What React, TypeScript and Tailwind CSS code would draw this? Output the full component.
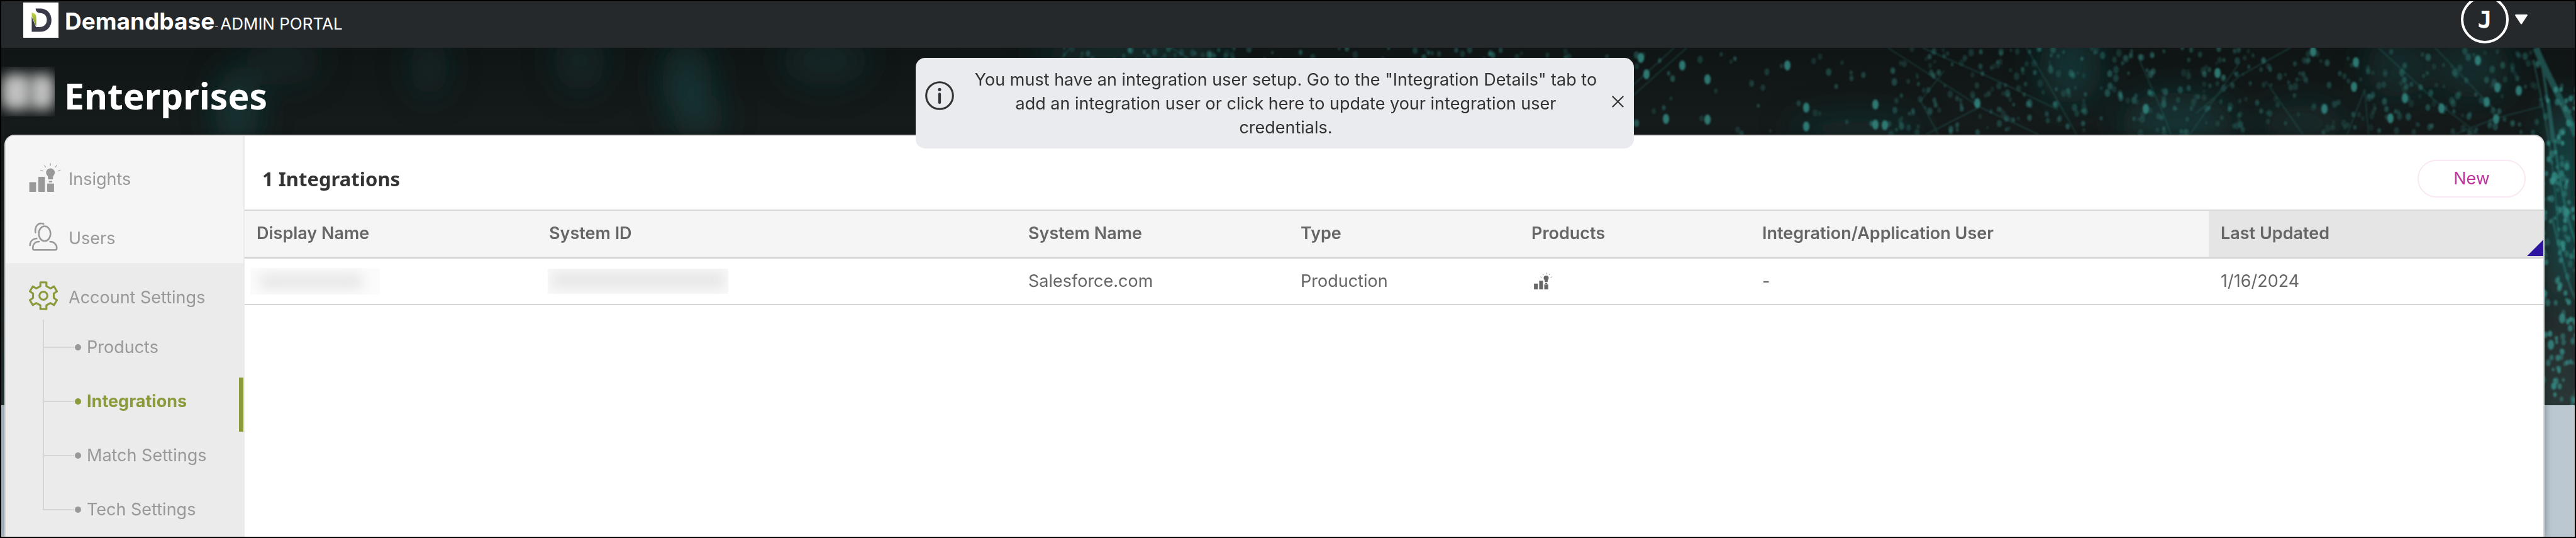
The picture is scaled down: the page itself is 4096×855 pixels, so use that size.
import React from 'react';

type IconProps = { className?: string };

const InsightsIcon: React.FC<IconProps> = ({ className }) => (
  <svg viewBox="0 0 58 53" fill="currentColor" stroke="none" className={className} aria-hidden="true">
    <rect x="0.3" y="35" width="12.4" height="18" rx="1" />
    <rect x="16.8" y="25.3" width="12.2" height="27.7" rx="1" />
    <rect x="33" y="37.7" width="12.6" height="15.3" rx="1" />
    <path d="M39 9.7a8 8 0 0 1 8 8c0 4-3.3 5.5-3.3 9V30h-9.2v-3.3c0-3.5-3.5-5-3.5-9a8 8 0 0 1 8-8z" />
    <rect x="36" y="32.8" width="6.3" height="2.6" rx="0.6" />
    <path
      d="M39 0.5V5.3M27.7 4L30.7 8M50.7 4L48 8M20.7 13.3L25.7 15M57.6 13.3L53 15"
      stroke="currentColor"
      strokeWidth="1.3"
    />
  </svg>
);

const UsersIcon: React.FC<IconProps> = ({ className }) => (
  <svg viewBox="0 0 54 54" fill="none" stroke="currentColor" strokeWidth="3" strokeLinecap="round" className={className} aria-hidden="true">
    <ellipse cx="29.3" cy="21.5" rx="11" ry="13.8" />
    <path d="M19 36.5C11 36.5 7.2 42 7.2 48.5C7.2 50.8 8.3 52 10.5 52H48.5C50.8 52 52 50.8 52 48.5C52 42 47 36.5 39.5 36.5" />
    <path d="M12.2 19.5C10.5 8.5 17 -0.5 27.2 3.2" />
    <path d="M14.5 30.5C6.5 31.5 1.8 36.5 2 43.5" />
  </svg>
);

const GearIcon: React.FC<IconProps> = ({ className }) => (
  <svg viewBox="0 0 53 53" fill="none" stroke="currentColor" strokeWidth="3.6" strokeLinejoin="round" className={className} aria-hidden="true">
    <path d="M21 2H32V9L39.5 13L46 9.5L51.3 18.5L45.5 22.5V30.5L51.3 34.5L46 43.5L39.5 40L32 44V51H21V44L13.5 40L7 43.5L1.7 34.5L7.5 30.5V22.5L1.7 18.5L7 9.5L13.5 13L21 9Z" />
    <circle cx="26.5" cy="26.5" r="7.3" />
  </svg>
);

const Logo: React.FC<IconProps> = ({ className }) => (
  <svg viewBox="0 0 65 65" className={className} aria-hidden="true">
    <defs>
      <linearGradient id="leaf" x1="0" y1="0" x2="0" y2="1">
        <stop offset="0" stopColor="#c5d94a" />
        <stop offset="1" stopColor="#6f8127" />
      </linearGradient>
    </defs>
    <path
      d="M22.8 11H31C44 11 52 20 52 32.5C52 45 44 54 31 54H15.6V26L23.5 45.4H30C38 45.4 43.5 40 43.5 32C43.5 24 38 19.5 31 19.5C26 19 23 16 22.8 11Z"
      fill="#383a48"
    />
    <path d="M15.6 18.7C20 19 24 22 24 28V45L15.6 25Z" fill="url(#leaf)" />
  </svg>
);

// Small deterministic generator so the backdrop is the same on every render
function makeRandom(seed: number) {
  let state = seed;
  return () => {
    state = (state * 16807) % 2147483647;
    return state / 2147483647;
  };
}

type Dot = { x: number; y: number; r: number; o: number };

function scatter(seed: number, count: number, x0: number, x1: number, y0: number, y1: number, strength: number): Dot[] {
  const rnd = makeRandom(seed);
  return Array.from({ length: count }, () => ({
    x: x0 + rnd() * (x1 - x0),
    y: y0 + rnd() * (y1 - y0),
    r: 2 + rnd() * 2.5,
    o: strength * (0.35 + rnd() * 0.65),
  }));
}

const dots: Dot[] = [
  ...scatter(11, 40, 1690, 1960, 0, 24, 0.4),
  ...scatter(23, 40, 1960, 2620, 0, 24, 0.45),
  ...scatter(37, 38, 2600, 3010, 0, 138, 0.5),
  ...scatter(41, 260, 3010, 3560, 0, 138, 0.45),
  ...scatter(59, 190, 3560, 4040, 0, 138, 0.42),
  ...scatter(67, 150, 4040, 4096, 60, 568, 0.85),
];

const brightDots: [number, number][] = [
  [2607, 16], [2616, 42], [2673, 28], [2713, 50], [2647, 113], [2870, 95], [2980, 90], [2980, 122], [2713, 114],
  [2840, 28], [2870, 125], [2995, 123], [3142, 88], [3410, 97], [3524, 40], [3676, 6], [3744, 23], [3741, 62],
  [3822, 80], [3799, 112], [3880, 96], [3694, 97], [3938, 20], [3969, 63], [4003, 68], [3952, 86], [3967, 113],
  [4060, 205], [4078, 262], [4072, 430], [4054, 472],
];

const HeroBackdrop: React.FC<IconProps> = ({ className }) => (
  <svg viewBox="0 0 4092 568" preserveAspectRatio="xMaxYMin slice" className={className} aria-hidden="true">
    <defs>
      <linearGradient id="base" x1="0" y1="0" x2="0" y2="1">
        <stop offset="0" stopColor="#0f1414" />
        <stop offset="0.25" stopColor="#161b1b" />
        <stop offset="1" stopColor="#2a3636" />
      </linearGradient>
      <filter id="glow" x="-20%" y="-20%" width="140%" height="140%">
        <feGaussianBlur stdDeviation="1.6" />
      </filter>
      <filter id="haze" x="-100%" y="-100%" width="300%" height="300%">
        <feGaussianBlur stdDeviation="26" />
      </filter>
    </defs>
    <rect width="4092" height="568" fill="url(#base)" />
    <g fill="#16504f" filter="url(#haze)">
      <ellipse cx="375" cy="100" rx="34" ry="70" opacity="0.5" />
      <ellipse cx="450" cy="20" rx="60" ry="40" opacity="0.25" />
      <ellipse cx="680" cy="30" rx="30" ry="50" opacity="0.3" />
      <ellipse cx="920" cy="20" rx="40" ry="50" opacity="0.3" />
      <ellipse cx="1090" cy="50" rx="40" ry="60" opacity="0.45" />
      <ellipse cx="1110" cy="110" rx="40" ry="40" opacity="0.35" />
      <ellipse cx="1310" cy="20" rx="70" ry="40" opacity="0.3" />
      <ellipse cx="1800" cy="10" rx="160" ry="30" opacity="0.4" />
      <ellipse cx="2950" cy="130" rx="110" ry="20" opacity="0.4" />
      <ellipse cx="3290" cy="30" rx="50" ry="60" opacity="0.5" />
      <ellipse cx="3460" cy="120" rx="90" ry="50" opacity="0.45" />
      <ellipse cx="3660" cy="120" rx="70" ry="30" opacity="0.35" />
      <ellipse cx="3810" cy="30" rx="50" ry="50" opacity="0.4" />
      <ellipse cx="3930" cy="30" rx="60" ry="50" opacity="0.4" />
      <ellipse cx="4080" cy="240" rx="30" ry="160" opacity="0.9" />
    </g>
    <g fill="none" stroke="#2b7a76" strokeWidth="2" opacity="0.35" filter="url(#glow)">
      <path d="M2590 80L2680 0M2592 62L2660 0M3000 0L3150 96L3240 138M3055 0L3160 46L3270 98M3142 96L3060 138M3220 0L3262 70L3300 138" />
      <path d="M3400 20L3440 110L3450 138M3090 36L3052 84L3080 138M3640 0L3560 44L3490 104M3870 0L3966 100M3780 0L3870 84L3940 138" />
      <path d="M3600 52L3660 138M3730 138L3758 66L3764 138M3966 112L4036 94M3560 22L3480 138M3966 112L3900 138M1700 0L1680 24M1860 0L1900 24" />
    </g>
    <g fill="none" stroke="#2f8681" strokeWidth="4" opacity="0.5" filter="url(#glow)">
      <path d="M4030 0C4048 44 4072 80 4094 140" strokeWidth="10" />
      <path d="M4034 0C4044 40 4050 90 4056 150" />
      <path d="M4026 20C4040 80 4060 180 4066 300" strokeWidth="2" />
      <path d="M4050 80C4062 160 4070 250 4094 310" />
      <path d="M4056 270C4070 330 4082 380 4094 400" strokeWidth="3" />
    </g>
    <g fill="#348f88" filter="url(#glow)">
      {dots.map((dot, i) => (
        <ellipse key={i} cx={dot.x} cy={dot.y} rx={dot.r} ry={dot.r * 1.4} opacity={dot.o} />
      ))}
      {brightDots.map(([x, y]) => (
        <ellipse key={`${x}-${y}`} cx={x} cy={y} rx="5" ry="8" opacity="0.8" />
      ))}
    </g>
  </svg>
);

const subItems = [
  { label: 'Products', active: false },
  { label: 'Integrations', active: true },
  { label: 'Match Settings', active: false },
  { label: 'Tech Settings', active: false },
];

const Sidebar: React.FC = () => (
  <nav className="flex w-[380px] shrink-0 flex-col rounded-tl-[14px] border-r-2 border-[#ebebeb] bg-[#f5f5f5] pt-[14px] text-[27px] text-[#999999]">
    <a href="#insights" className="flex gap-[17px] pt-[29px] pb-[13px] pl-[37px] leading-[52px]">
      <span className="w-[46px]">
        <InsightsIcon className="h-[46px] w-[51px] max-w-none" />
      </span>
      Insights
    </a>
    <a href="#users" className="flex gap-[17px] pt-[29px] pb-[13px] pl-[37px] leading-[52px]">
      <UsersIcon className="size-[46px]" />
      Users
    </a>
    <div className="flex-1 bg-[#ebebeb]">
      <a href="#account" className="flex gap-[17px] pt-[29px] pb-[9px] pl-[37px] leading-[52px]">
        <GearIcon className="size-[46px] text-[#8c9a3c]" />
        Account Settings
      </a>
      <div className="ml-[59px] h-[6px] border-l-2 border-[#d6d6d6]" />
      <ul>
        {subItems.map((item, i) => {
          const last = i === subItems.length - 1;
          return (
            <li
              key={item.label}
              className={`flex pl-[59px] ${last ? 'h-[74px]' : 'h-[86px]'} ${item.active ? 'border-r-[7px] border-[#8c9a3c]' : ''}`}
            >
              <div className="flex w-[50px] flex-col">
                <div className="h-[39px] border-b-2 border-l-2 border-[#d6d6d6]" />
                {!last && <div className="flex-1 border-l-2 border-[#d6d6d6]" />}
              </div>
              <a
                href={`#${item.label.toLowerCase().replace(' ', '-')}`}
                className={`flex h-[76px] items-center gap-[9px] pl-px ${item.active ? 'font-bold text-[#8c9a3c]' : ''}`}
              >
                <span className="size-[10px] rounded-full bg-current" />
                {item.label}
              </a>
            </li>
          );
        })}
      </ul>
    </div>
  </nav>
);

const IntegrationsTable: React.FC = () => (
  <table className="w-full table-fixed border-collapse text-left text-[27px] text-[#666666]">
    <thead>
      <tr className="h-[75px] border-t-2 border-b-[3px] border-[#d6d6d6] bg-[#f5f5f5]">
        <th className="w-[465px] pl-[19px] font-semibold">Display Name</th>
        <th className="w-[762px] pl-[19px] font-semibold">System ID</th>
        <th className="w-[433px] pl-[19px] font-semibold">System Name</th>
        <th className="w-[367px] pl-[19px] font-semibold">Type</th>
        <th className="w-[367px] pl-[19px] font-semibold">Products</th>
        <th className="w-[729px] pl-[19px] font-semibold">Integration/Application User</th>
        <th className="bg-[#e5e5e5] p-0 font-semibold">
          <div className="flex h-[72px] items-center justify-between pl-[19px]">
            Last Updated
            <svg viewBox="0 0 26 26" className="h-[26px] w-[26px] self-end" aria-hidden="true">
              <path d="M26 0V26H0Z" fill="#2e15a1" />
            </svg>
          </div>
        </th>
      </tr>
    </thead>
    <tbody>
      <tr className="h-[75px] border-b-2 border-[#d6d6d6]">
        <td className="pl-[9px]">
          <div className="h-[42px] w-[206px] overflow-hidden bg-[#fbfbfb] px-[14px] py-[8px]">
            <div className="h-[26px] w-[166px] rounded-full bg-[#e8e8e8] blur-[9px]" />
          </div>
        </td>
        <td className="pl-[17px]">
          <div className="h-[40px] w-[287px] overflow-hidden bg-[#f8f8f8] px-[8px] py-[6px]">
            <div className="h-[24px] bg-[#e6e6e6] blur-[9px]" />
          </div>
        </td>
        <td className="pl-[19px]">Salesforce.com</td>
        <td className="pl-[19px]">Production</td>
        <td className="pl-[23px]">
          <InsightsIcon className="h-[27px] w-[29px]" />
        </td>
        <td className="pl-[19px]">-</td>
        <td className="pl-[19px]">1/16/2024</td>
      </tr>
    </tbody>
  </table>
);

const Notice: React.FC = () => (
  <div
    role="status"
    className="absolute top-[16px] left-1/2 flex h-[144px] w-[1142px] -translate-x-1/2 items-start rounded-[15px] bg-[#eaebef] text-[27px] text-[#333333]"
  >
    <svg viewBox="0 0 54 54" className="mt-[37px] ml-[15px] size-[46px] shrink-0" fill="none" stroke="currentColor" aria-hidden="true">
      <circle cx="27" cy="27" r="25" strokeWidth="3.6" />
      <path d="M27 24V40" strokeWidth="5" strokeLinecap="round" />
      <circle cx="27" cy="15.5" r="3" fill="currentColor" stroke="none" />
    </svg>
    <p className="mx-[29px] mt-[16px] w-[998px] text-center leading-[38px]">
      You must have an integration user setup. Go to the "Integration Details" tab to add an integration user or click here to
      update your integration user credentials.
    </p>
    <button type="button" aria-label="Dismiss" className="mt-[60px] -ml-[10px]">
      <svg viewBox="0 0 20 20" className="size-[19px]" fill="none" stroke="currentColor" strokeWidth="2.2" strokeLinecap="round" aria-hidden="true">
        <path d="M1.5 1.5L18.5 18.5M18.5 1.5L1.5 18.5" />
      </svg>
    </button>
  </div>
);

const App: React.FC = () => {
  return (
    <div className="flex min-h-screen flex-col overflow-hidden border-2 border-black bg-[#bbc8d1] font-['Inter',sans-serif]">
      <header className="flex h-[74px] items-start justify-between overflow-hidden bg-[#25292c] pr-[75px] pl-[35px] text-white">
        <div className="flex pt-[2px]">
          <div className="size-[56px] bg-white">
            <Logo className="size-[56px]" />
          </div>
          <div className="flex items-baseline pl-[10px] leading-[60px]">
            <span className="text-[37px] font-bold">Demandbase</span>
            <span className="text-[8px]">™</span>
            <span className="pl-[4px] text-[26px]">ADMIN PORTAL</span>
          </div>
        </div>
        <button type="button" className="-mt-[9px] flex items-center gap-[10px]" aria-label="Account menu">
          <span className="flex size-[76px] items-center justify-center rounded-full border-4 border-white font-['DejaVu_Sans_Mono',monospace] text-[38px] font-bold">
            J
          </span>
          <svg viewBox="0 0 20 16" className="h-[16px] w-[20px]" fill="currentColor" aria-hidden="true">
            <path d="M1 0H19Q20.5 0.5 19.5 2L11 15Q10 16.5 9 15L0.5 2Q-0.5 0.5 1 0Z" />
          </svg>
        </button>
      </header>

      <div className="relative flex flex-1 flex-col">
        <HeroBackdrop className="absolute inset-x-0 top-0 h-[568px] w-full" />

        <div className="relative flex h-[138px] items-start gap-[15px] pt-[30px]">
          <div className="flex h-[79px] w-[85px] items-center overflow-hidden">
            <div className="h-[58px] w-[48px] rounded-2xl bg-[#c0c0c0] blur-[10px]" />
            <div className="-ml-[4px] h-[58px] w-[41px] rounded-2xl bg-[#c0c0c0] blur-[10px]" />
          </div>
          <h1 className="pt-[7px] font-['Noto_Sans',sans-serif] text-[57px] leading-[79px] font-bold text-white">Enterprises</h1>
        </div>

        <div className="relative mr-[48px] ml-[5px] flex flex-1 rounded-t-[16px] border-2 border-b-0 border-[#d6d6d6] bg-white shadow-[0_0_12px_rgba(0,0,0,0.4)]">
          <Sidebar />
          <main className="min-w-0 flex-1">
            <div className="flex items-start justify-between pt-[38px] pr-[28px] pb-[19px] pl-[28px]">
              <h2 className="font-['Noto_Sans',sans-serif] text-[31px] leading-[60px] font-bold text-[#333333]">1 Integrations</h2>
              <button
                type="button"
                className="h-[60px] w-[172px] rounded-full border-2 border-[#f8e9f4] text-[27px] text-[#c2339b]"
              >
                New
              </button>
            </div>
            <IntegrationsTable />
          </main>
        </div>

        <div className="pointer-events-none absolute inset-x-0 top-0 mr-[48px] ml-[5px]">
          <div className="pointer-events-auto">
            <Notice />
          </div>
        </div>
      </div>
    </div>
  );
};

export default App;
